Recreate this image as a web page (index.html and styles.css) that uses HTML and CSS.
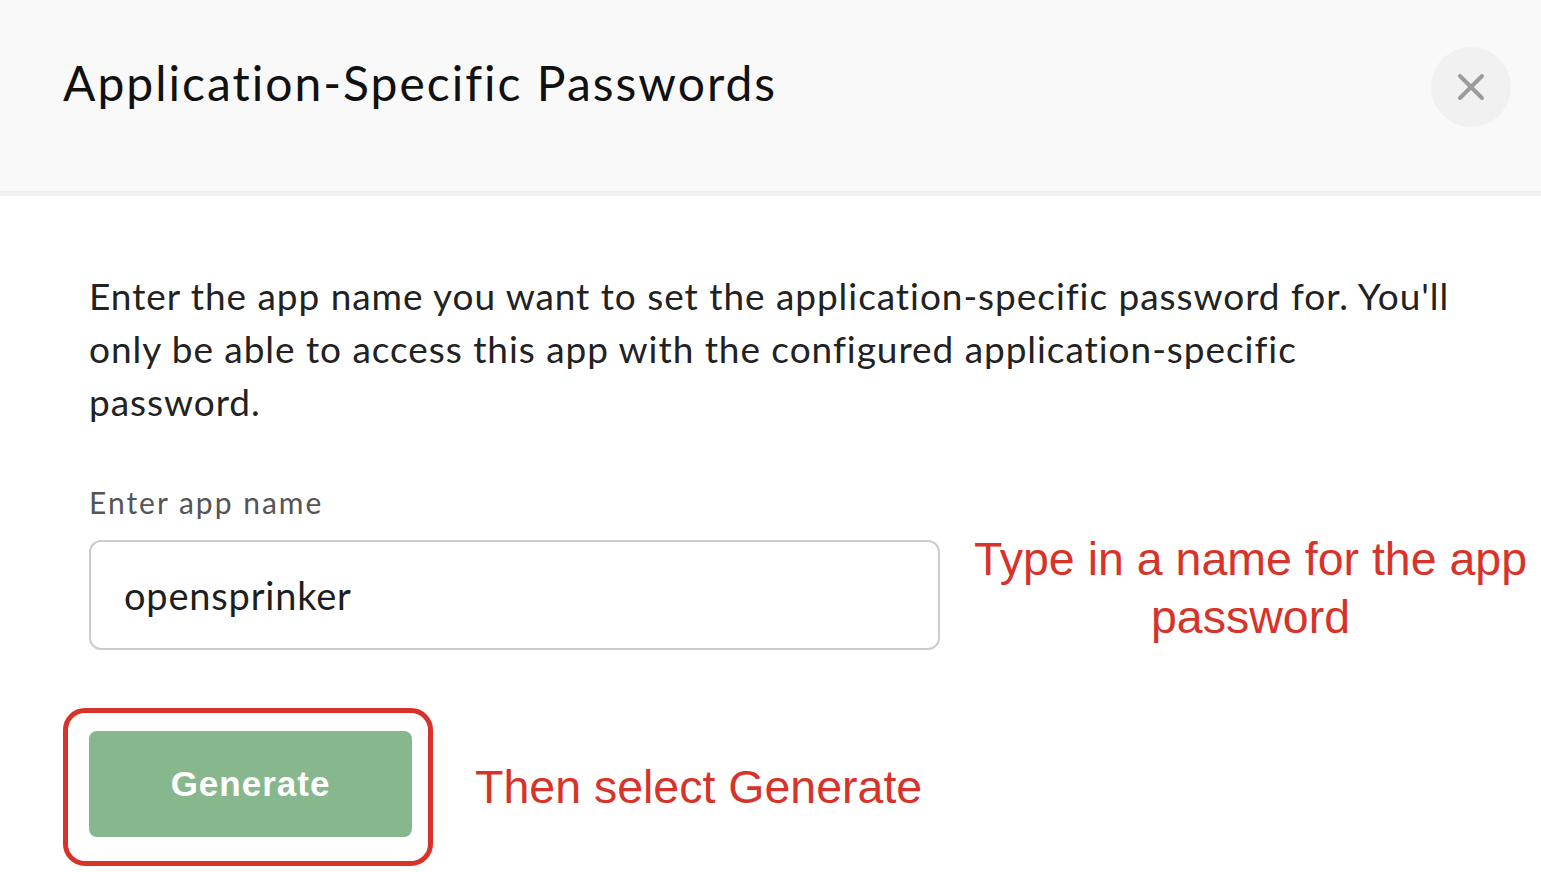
FILE: index.html
```html
<!DOCTYPE html>
<html lang="en">
<head>
<meta charset="utf-8">
<title>Application-Specific Passwords</title>
<link rel="stylesheet" href="styles.css">
</head>
<body>
<div class="dialog">
  <header class="dialog-header">
    <h1 class="dialog-title">Application-Specific Passwords</h1>
    <button class="close-btn" aria-label="Close">
      <svg width="28" height="28" viewBox="0 0 28 28"><path d="M3 3 L25 25 M25 3 L3 25" stroke="#9c9c9c" stroke-width="4" stroke-linecap="round" fill="none"/></svg>
    </button>
  </header>
  <main class="dialog-body">
    <p class="intro">Enter the app name you want to set the application-specific password for. You'll only be able to access this app with the configured application-specific password.</p>
    <label class="field-label" for="appname">Enter app name</label>
    <div class="field-row">
      <div class="input-box"><span class="input-text">opensprinker</span></div>
      <div class="note note-field">Type in a name for the app password</div>
    </div>
    <div class="action-row">
      <div class="highlight">
        <button class="generate-btn">Generate</button>
      </div>
      <div class="note note-action">Then select Generate</div>
    </div>
  </main>
</div>
</body>
</html>
```
FILE: styles.css
```css
html, body {
  margin: 0;
  padding: 0;
  background: #ffffff;
}
body {
  font-family: Lato, "Noto Sans", sans-serif;
  font-variant-ligatures: none;
  color: #222222;
  width: 1541px;
  height: 872px;
  overflow: hidden;
}
.dialog-header {
  height: 191px;
  background: #f9f9f9;
  border-bottom: 5px solid #f1f1f1;
  display: flex;
  justify-content: space-between;
  align-items: flex-start;
  padding: 0 30px 0 63px;
}
.dialog-title {
  margin: 54px 0 0 0;
  font-size: 48px;
  line-height: 58px;
  font-weight: 400;
  letter-spacing: 2px;
  color: #111111;
}
.close-btn {
  margin-top: 47px;
  width: 80px;
  height: 80px;
  border-radius: 50%;
  border: none;
  background: #f1f1f1;
  display: flex;
  align-items: center;
  justify-content: center;
  padding: 0;
}
.dialog-body {
  padding: 73px 0 0 89px;
}
.intro {
  margin: 0;
  font-size: 37px;
  line-height: 53px;
  letter-spacing: 0.95px;
  max-width: 1372px;
  color: #222222;
}
.field-label {
  display: block;
  margin-top: 56px;
  font-size: 30px;
  line-height: 36px;
  letter-spacing: 2px;
  color: #555555;
}
.field-row {
  display: flex;
  align-items: flex-start;
  margin-top: 20px;
}
.input-box {
  width: 851px;
  height: 110px;
  box-sizing: border-box;
  border: 2px solid #cccccc;
  border-radius: 12px;
  display: flex;
  align-items: center;
  padding-left: 33px;
}
.input-text {
  font-size: 38px;
  letter-spacing: 0.8px;
  color: #1e1e1e;
}
.note {
  font-family: "Liberation Sans", Arial, sans-serif;
  color: #d8332a;
  font-size: 46.5px;
  line-height: 58px;
}
.note-field {
  flex: 1;
  text-align: center;
  margin: -10px 0 0 20px;
}
.action-row {
  display: flex;
  align-items: center;
  margin-top: 58px;
  margin-left: -26px;
}
.highlight {
  border: 5px solid #d8332a;
  border-radius: 22px;
  padding: 18px 16px 24px 21px;
}
.generate-btn {
  display: block;
  width: 323px;
  height: 106px;
  border: none;
  border-radius: 8px;
  background: #87b78c;
  color: #ffffff;
  font-family: "Liberation Sans", Arial, sans-serif;
  font-size: 35px;
  font-weight: 700;
  letter-spacing: 1px;
}
.note-action {
  margin-left: 42px;
}
```
